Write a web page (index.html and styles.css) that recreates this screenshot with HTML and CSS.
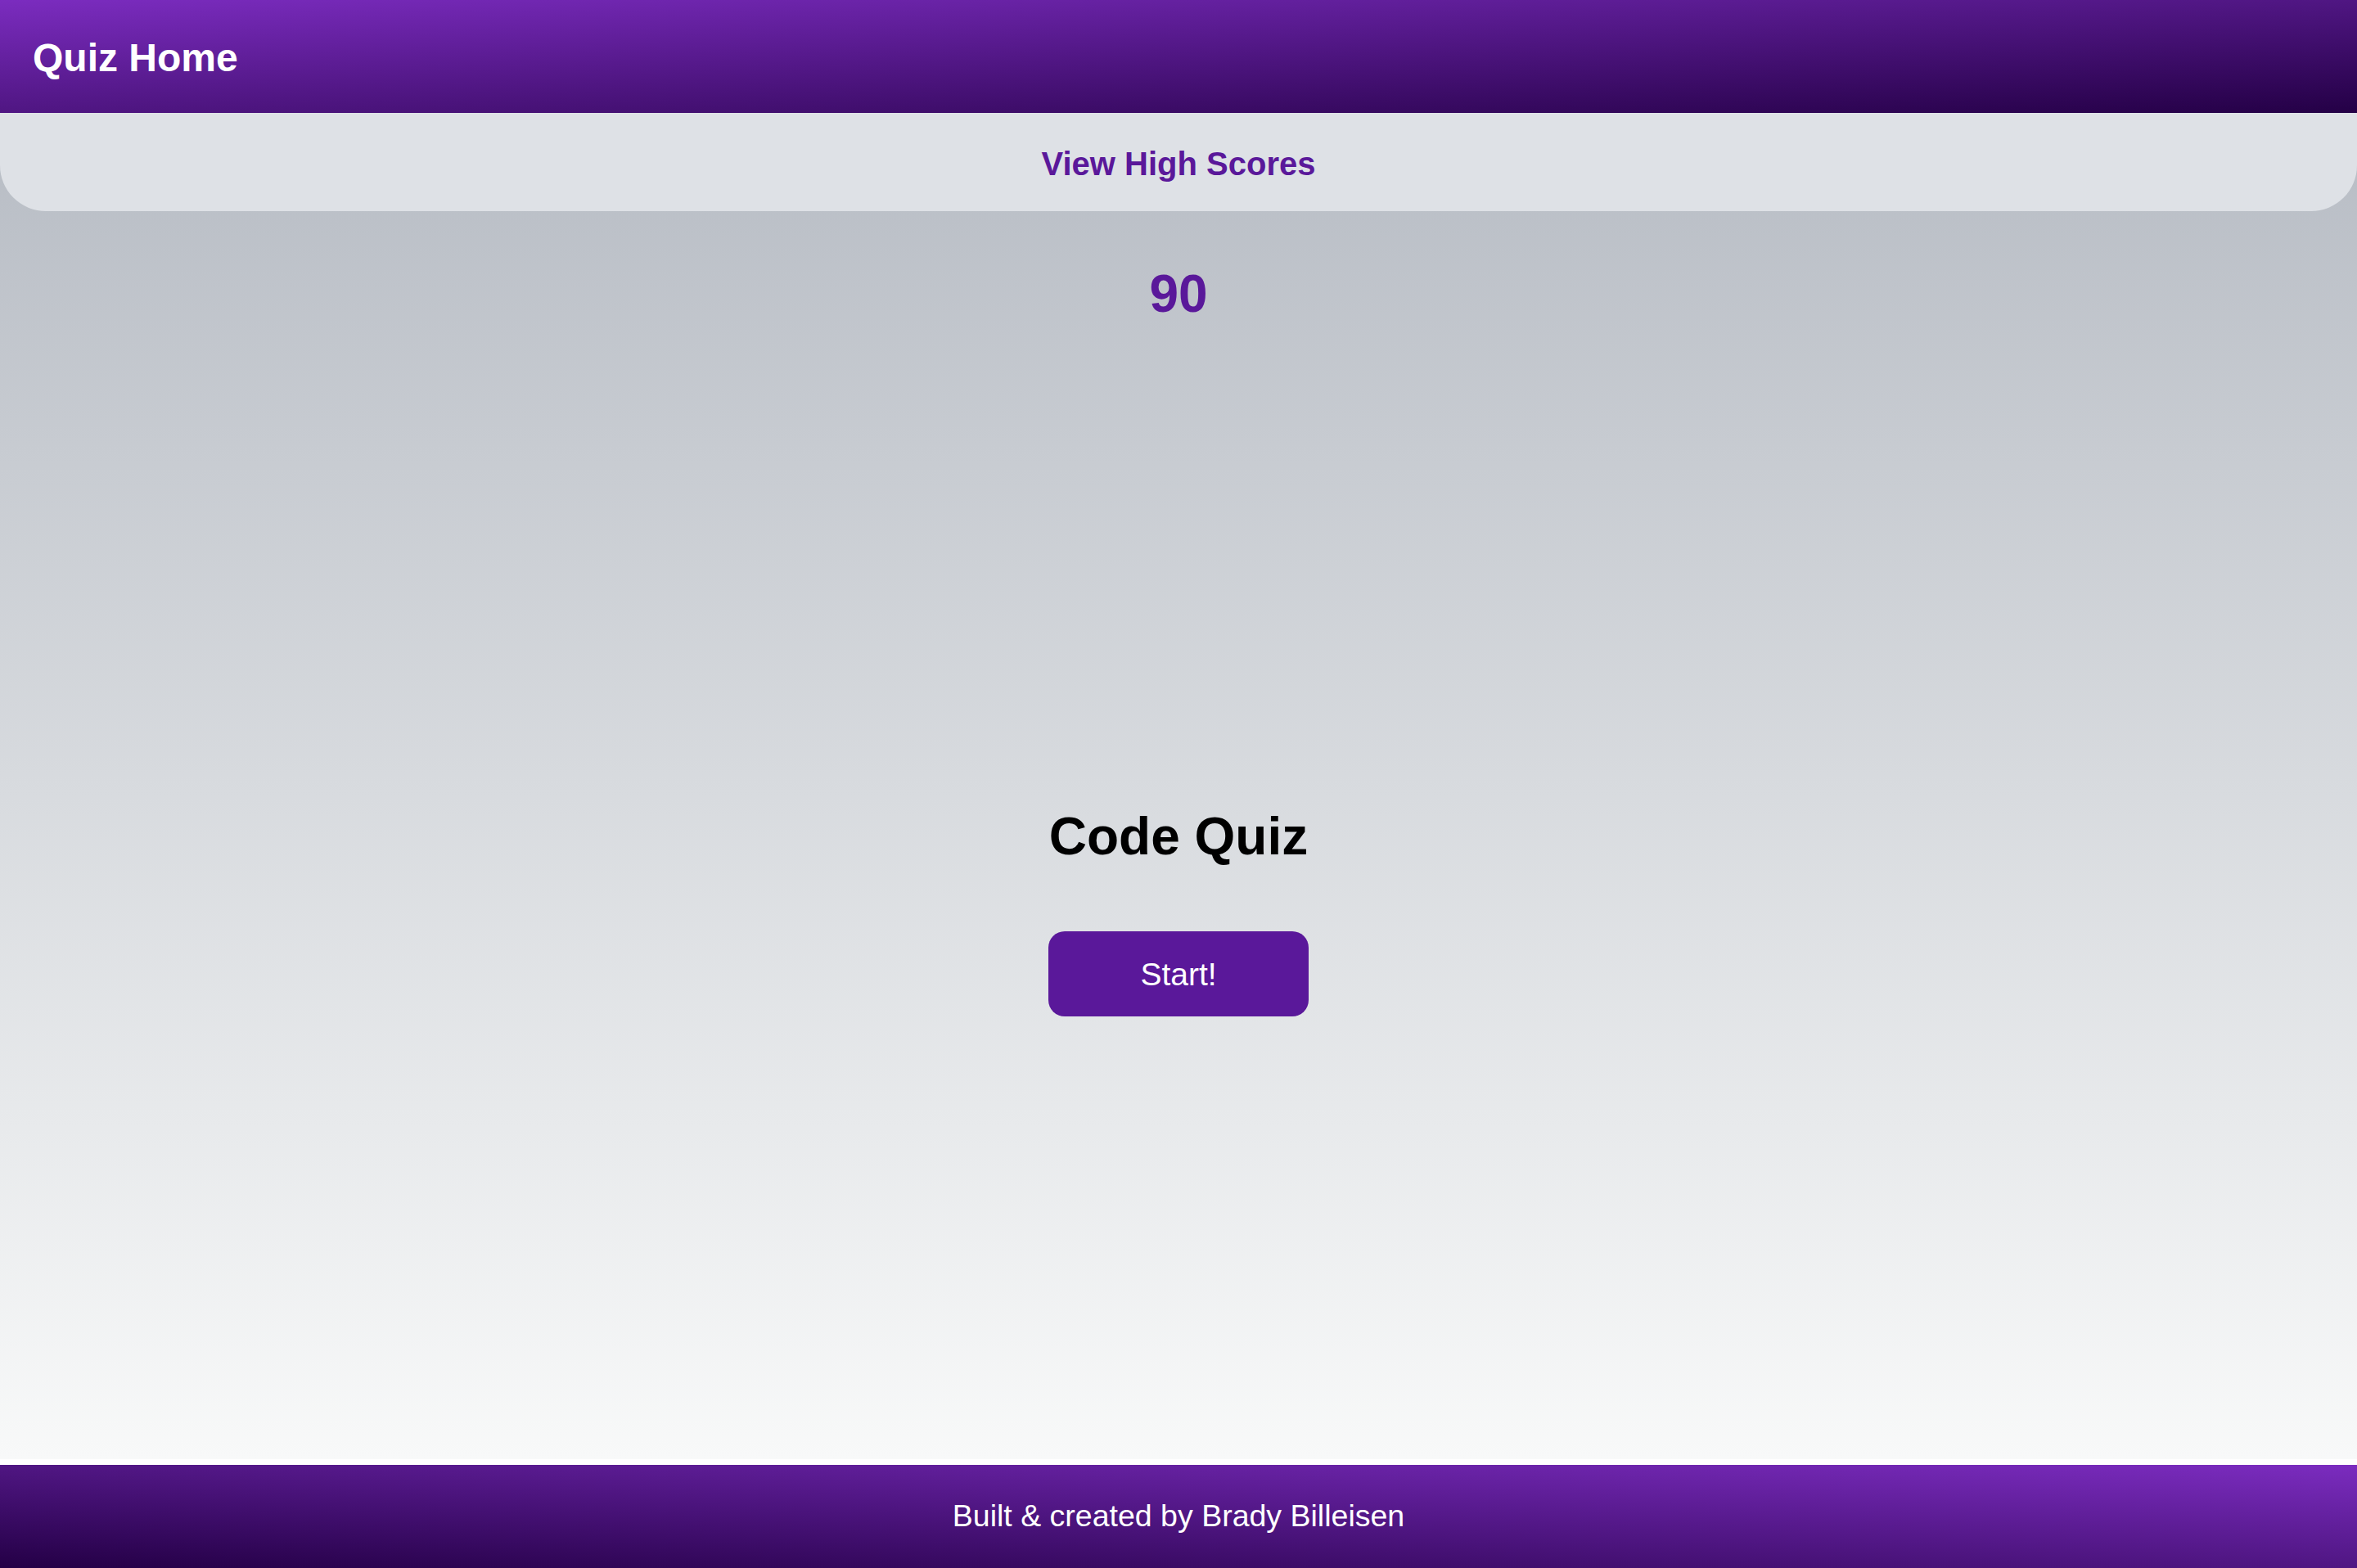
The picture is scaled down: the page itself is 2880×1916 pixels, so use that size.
FILE: index.html
```html
<!DOCTYPE html>
<html lang="en">
<head>
<meta charset="utf-8">
<title>Code Quiz</title>
<link rel="stylesheet" href="styles.css">
</head>
<body>
<header class="topbar">
  <h1 class="brand">Quiz Home</h1>
</header>
<div class="stage">
  <nav class="scorebar">
    <a class="scores-link" href="#">View High Scores</a>
  </nav>
  <main class="main">
    <div class="timer">90</div>
    <h2 class="title">Code Quiz</h2>
    <button class="start-btn" type="button">Start!</button>
  </main>
</div>
<footer class="footer">
  <p class="credit">Built &amp; created by Brady Billeisen</p>
</footer>
</body>
</html>
```

FILE: styles.css
```css
* { box-sizing: border-box; }

html, body {
  margin: 0;
  padding: 0;
}

body {
  min-height: 100vh;
  display: flex;
  flex-direction: column;
  background: #ffffff;
  font-family: "Liberation Sans", Arial, Helvetica, sans-serif;
}

.topbar {
  height: 138px;
  display: flex;
  align-items: center;
  padding: 3px 40px 0;
  background: linear-gradient(to bottom right, #7b2cbf, #240046);
}

.brand {
  margin: 0;
  color: #ffffff;
  font-size: 48px;
  font-weight: 700;
  line-height: 1;
}

.stage {
  flex: 1;
  display: flex;
  flex-direction: column;
  background: linear-gradient(to bottom, #b7bcc4, #f8f9f9);
}

.scorebar {
  height: 120px;
  display: flex;
  align-items: center;
  justify-content: center;
  padding-top: 3px;
  background: #dee1e6;
  border-radius: 0 0 56px 56px;
}

.scores-link {
  color: #5a189a;
  font-size: 40px;
  font-weight: 700;
  text-decoration: none;
  line-height: 1;
}

.main {
  flex: 1;
  display: flex;
  flex-direction: column;
  align-items: center;
  padding-top: 69px;
}

.timer {
  color: #5a189a;
  font-size: 64px;
  font-weight: 700;
  line-height: 64px;
}

.title {
  margin: 599px 0 0;
  color: #000000;
  font-size: 64px;
  font-weight: 700;
  line-height: 64px;
}

.start-btn {
  margin-top: 84px;
  width: 318px;
  height: 104px;
  border: none;
  border-radius: 20px;
  background: #5a189a;
  color: #ffffff;
  font-family: "Liberation Sans", Arial, Helvetica, sans-serif;
  font-size: 39px;
  line-height: 1;
  cursor: pointer;
}

.footer {
  margin-top: 7px;
  height: 126px;
  display: flex;
  align-items: center;
  justify-content: center;
  background: linear-gradient(to top right, #240046, #7b2cbf);
}

.credit {
  margin: 0;
  color: #ffffff;
  font-size: 37.5px;
  line-height: 1;
}
```
